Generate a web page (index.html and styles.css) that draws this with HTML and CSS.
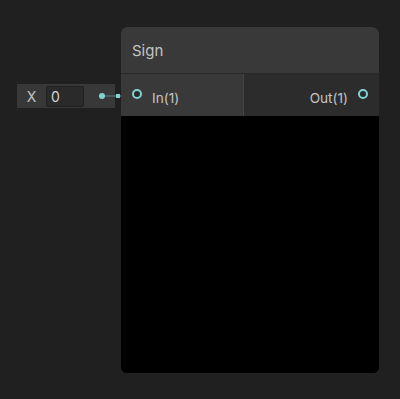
FILE: index.html
```html
<!DOCTYPE html>
<html>
<head>
    <link rel="stylesheet" href="styles.css">
</head>
<body>
    <div class="graph">
        <!-- inline value feeding the In(1) port -->
        <div class="inline-field">
            <span class="field-label">X</span>
            <div class="field-value">0</div>
            <span class="field-dot"></span>
        </div>
        <div class="edge">
            <span class="edge-mark"></span>
        </div>

        <div class="node">
            <div class="node-title">Sign</div>
            <div class="node-ports">
                <div class="port-in">
                    <span class="port"></span>
                    <span class="port-name">In(1)</span>
                </div>
                <div class="port-out">
                    <span class="port-name">Out(1)</span>
                    <span class="port"></span>
                </div>
            </div>
            <div class="node-preview"></div>
        </div>
    </div>
</body>
</html>
```

FILE: styles.css
```css
html, body {
    margin: 0;
    padding: 0;
    background: #202020;
}

* {
    box-sizing: border-box;
}

.graph {
    position: relative;
    width: 400px;
    height: 399px;
    overflow: hidden;
    font-family: Inter, "Noto Sans", sans-serif;
    color: #c4c4c4;
    background: #202020;
}

.node {
    position: absolute;
    left: 121px;
    top: 27px;
    width: 258px;
    height: 346px;
    border-radius: 6px;
    overflow: hidden;
    display: flex;
    flex-direction: column;
    background: #000;
}

.node-title {
    height: 47px;
    padding-left: 11px;
    padding-top: 1px;
    display: flex;
    align-items: center;
    font-size: 15px;
    background: #393939;
    border-bottom: 1px solid #2b2b2b;
}

.node-ports {
    display: flex;
    height: 42px;
}

.port-in {
    width: 123px;
    display: flex;
    align-items: center;
    padding-left: 11px;
    gap: 10px;
    background: #393939;
    border-right: 1px solid #444;
}

.port-out {
    flex: 1;
    display: flex;
    align-items: center;
    justify-content: flex-end;
    padding-right: 11px;
    gap: 10px;
    background: #2c2c2c;
}

.port {
    width: 10px;
    height: 10px;
    margin-top: -2px;
    border: 2px solid #7fd4d0;
    border-radius: 50%;
    background: #2a2a2a;
}

.port-name {
    font-size: 13.6px;
    padding-top: 5px;
}

.node-preview {
    flex: 1;
    background: #000;
}

.inline-field {
    position: absolute;
    left: 17px;
    top: 84px;
    width: 98px;
    height: 24px;
    display: flex;
    align-items: center;
    background: #383838;
}

.field-label {
    width: 29px;
    text-align: center;
    font-size: 14px;
}

.field-value {
    width: 38px;
    height: 21px;
    padding-left: 4px;
    font-size: 14px;
    line-height: 19px;
    color: #d4d4d4;
    background: #2a2a2a;
    border: 1px solid #1f1f1f;
    border-radius: 2px;
}

.field-dot {
    width: 6px;
    height: 6px;
    margin-left: 15px;
    border-radius: 50%;
    background: #7fd4d0;
}

.edge {
    position: absolute;
    left: 105px;
    top: 95px;
    width: 26px;
    height: 2px;
    background: #4f5a5a;
}

.edge-mark {
    position: absolute;
    left: 11px;
    top: -1px;
    width: 4px;
    height: 4px;
    background: #7fd4d0;
}
```
